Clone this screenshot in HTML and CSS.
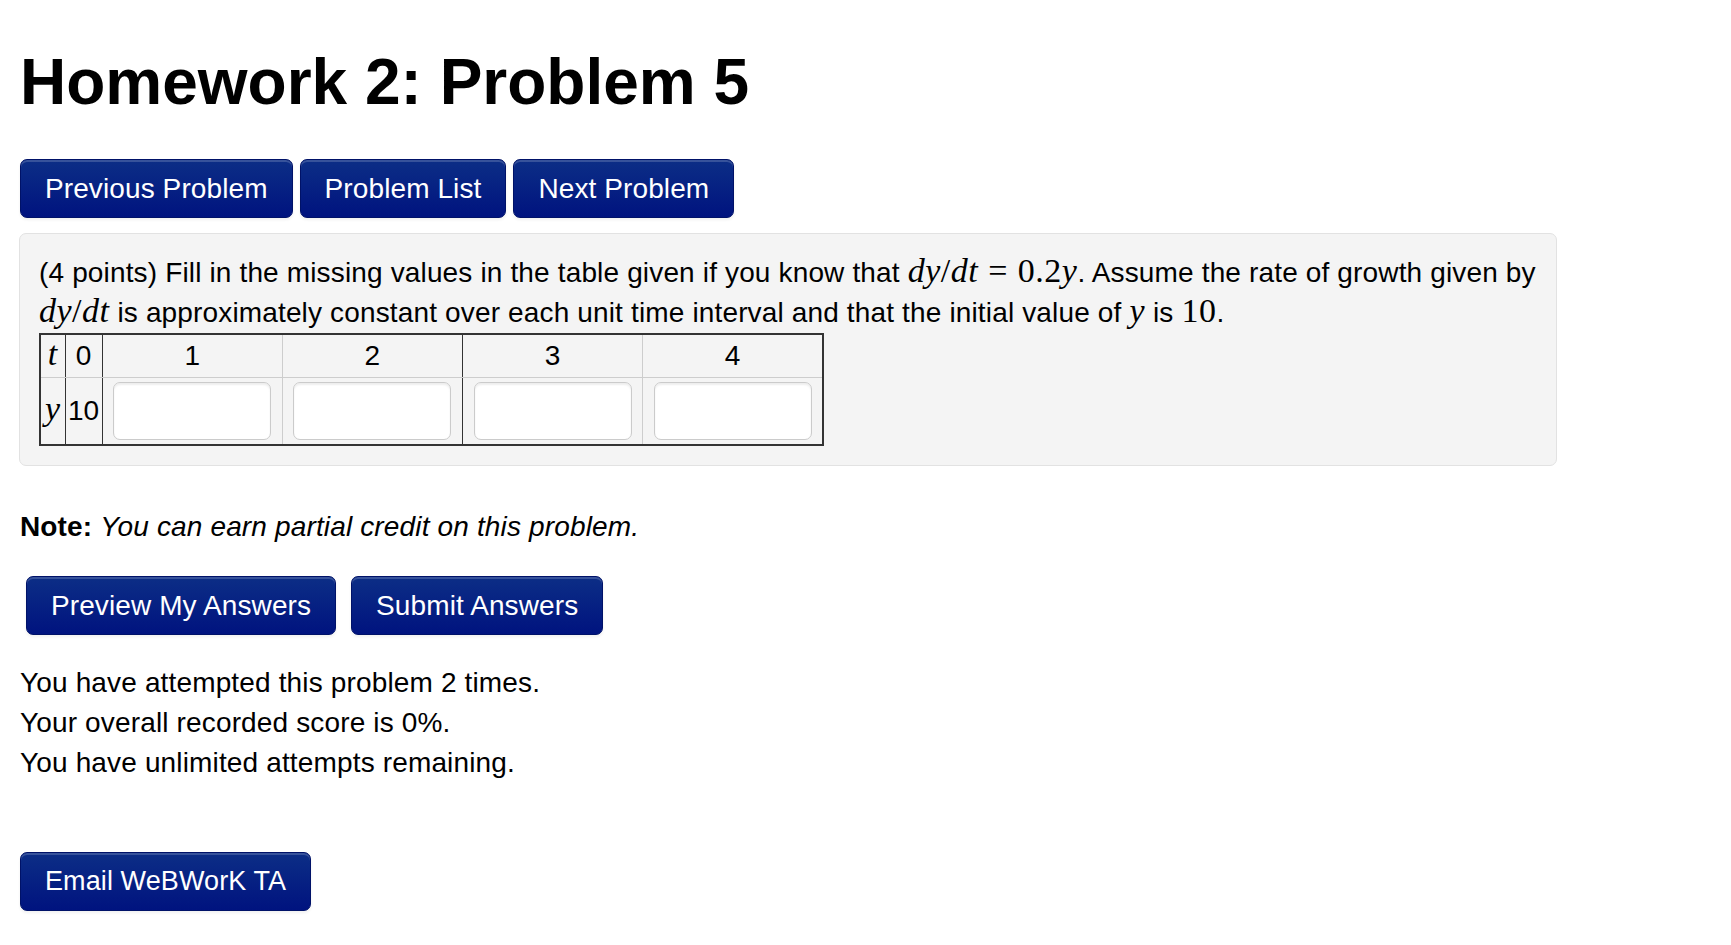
FILE: index.html
```html
<!DOCTYPE html>
<html lang="en">
<head>
	<meta charset="UTF-8">
	<title>Homework 2: Problem 5</title>
	<link rel="stylesheet" href="styles.css">
</head>
<body>
	<div class="page">
		<h1>Homework 2: Problem 5</h1>

		<div class="nav">
			<a class="btn" href="#">Previous Problem</a>
			<a class="btn" href="#">Problem List</a>
			<a class="btn" href="#">Next Problem</a>
		</div>

		<div class="problem">
			<div class="text">
				(4 points) Fill in the missing values in the table given if you know that
				<span class="math"><i>d</i><i>y</i>/<i>d</i><i>t</i><span class="eq">=</span>0.2<i>y</i></span>. Assume the rate of growth given by<br>
				<span class="math"><i>d</i><i>y</i>/<i>d</i><i>t</i></span> is approximately constant over each unit time interval and that the initial value of
				<span class="math"><i>y</i></span> is <span class="math">10</span>.
			</div>
			<table class="grid">
				<colgroup>
					<col class="c-var">
					<col class="c-zero">
					<col class="c-val">
					<col class="c-val">
					<col class="c-val">
					<col class="c-val">
				</colgroup>
				<tr class="head">
					<td class="dark"><span class="math"><i>t</i></span></td>
					<td class="dark">0</td>
					<td>1</td>
					<td class="dark">2</td>
					<td>3</td>
					<td class="last">4</td>
				</tr>
				<tr class="body">
					<td class="dark"><span class="math"><i>y</i></span></td>
					<td class="dark">10</td>
					<td><input type="text"></td>
					<td class="dark"><input type="text"></td>
					<td><input type="text"></td>
					<td class="last"><input type="text"></td>
				</tr>
			</table>
		</div>

		<p class="note"><b>Note:</b> <i>You can earn partial credit on this problem.</i></p>

		<div class="answers">
			<a class="btn" href="#">Preview My Answers</a>
			<a class="btn" href="#">Submit Answers</a>
		</div>

		<div class="status">
			You have attempted this problem 2 times.<br>
			Your overall recorded score is 0%.<br>
			You have unlimited attempts remaining.
		</div>

		<div class="email">
			<a class="btn btn-sm" href="#">Email WeBWorK TA</a>
		</div>
	</div>
</body>
</html>
```

FILE: styles.css
```css
*{
	margin: 0px;
	padding: 0px;
	box-sizing: border-box;
}
body{
	background: #fff;
	color: #000;
	font-family: "Liberation Sans", Arial, Helvetica, sans-serif;
	font-size: 28px;
	line-height: 40px;
	letter-spacing: 0.15px;
}
.page{
	padding: 42px 20px 40px 20px;
}
h1{
	font-size: 64px;
	line-height: 80px;
	font-weight: bold;
	letter-spacing: 0;
}

/* buttons */
.btn{
	display: inline-block;
	padding: 8px 24px;
	font-size: 28px;
	line-height: 41px;
	letter-spacing: 0.1px;
	color: #fff;
	text-decoration: none;
	border: 1px solid #001268;
	border-radius: 7px;
	background: linear-gradient(#0c2e86, #00137f);
	box-shadow: inset 0 2px 0 rgba(255,255,255,.18), 0 2px 3px rgba(0,0,0,.06);
}
.btn-sm{
	font-size: 27px;
}
.nav{
	display: flex;
	gap: 7px;
	margin-top: 37px;
}

/* problem box */
.problem{
	width: 1538px;
	margin-top: 15px;
	margin-left: -1px;
	padding: 19px 19px;
	background: #f4f4f4;
	border: 1px solid #e2e2e2;
	border-radius: 7px;
}
.math{
	font-family: "Liberation Serif", "Times New Roman", serif;
	font-size: 34px;
	letter-spacing: 0.5px;
	line-height: 1;
}
.math i{
	font-style: italic;
}
.eq{
	margin: 0 10px;
}
.grid{
	border-collapse: collapse;
	table-layout: fixed;
	width: 785px;
	border: 2px solid #333;
	letter-spacing: 0;
}
.c-var{
	width: 25px;
}
.c-zero{
	width: 37px;
}
.c-val{
	width: 180px;
}
.grid td{
	text-align: center;
	vertical-align: middle;
	border-right: 1px solid #cdcdcd;
	padding: 1px 0;
}
.grid td.dark{
	border-right: 1px solid #333;
}
.grid .head td{
	border-bottom: 1px solid #cdcdcd;
}
.grid .body td{
	padding: 4px 0;
}
.grid td input{
	display: block;
	width: 158px;
	height: 58px;
	margin: 0 auto;
	border: 1px solid #cbcbcb;
	border-radius: 7px;
	background: #fff;
	box-shadow: inset 0 2px 2px rgba(0,0,0,.07);
	font-size: 28px;
}

/* below the problem */
.note{
	margin-top: 41px;
}
.note i{
	font-style: italic;
}
.answers{
	display: flex;
	gap: 15px;
	margin-top: 29px;
	padding-left: 6px;
}
.status{
	margin-top: 28px;
}
.email{
	margin-top: 69px;
}
```
